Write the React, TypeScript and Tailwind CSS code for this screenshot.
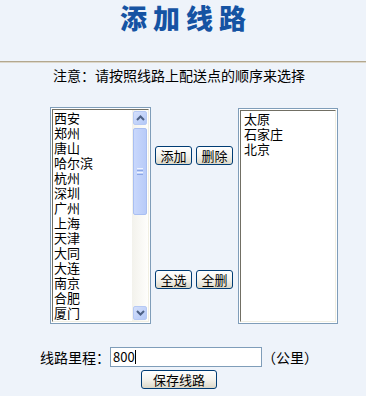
import React from 'react';

const font = { fontFamily: '"Noto Sans CJK SC", "Noto Sans", sans-serif' };

const leftItems = ['西安', '郑州', '唐山', '哈尔滨', '杭州', '深圳', '广州', '上海', '天津', '大同', '大连', '南京', '合肥', '厦门'];
const rightItems = ['太原', '石家庄', '北京'];

const Chevron: React.FC<{ down?: boolean }> = ({ down }) => (
  <svg width="9" height="6" viewBox="0 0 9 6">
    <polyline
      points={down ? '1,1 4.5,4.5 8,1' : '1,5 4.5,1.5 8,5'}
      fill="none"
      stroke="#4d6185"
      strokeWidth="2"
    />
  </svg>
);

const ScrollButton: React.FC<{ down?: boolean }> = ({ down }) => (
  <div className="h-[16px] p-px">
    <div className="h-full rounded-[2px] border border-[#b6c9f4] bg-gradient-to-br from-[#d5e0fb] to-[#b3c8f7] flex items-center justify-center">
      <Chevron down={down} />
    </div>
  </div>
);

const Scrollbar: React.FC = () => (
  <div className="w-[16px] h-full flex flex-col bg-gradient-to-r from-[#f3f2ec] to-[#fefefc]">
    <ScrollButton />
    <div className="mx-px mt-[2px] h-[87px] rounded-[2px] border border-[#a9bff2] bg-gradient-to-r from-[#c9d8fc] to-[#b8cbf8] flex flex-col items-center justify-center gap-[1px]">
      <div className="w-[6px] h-px bg-[#eef3fe]" />
      <div className="w-[6px] h-px bg-[#8ca7e6]" />
      <div className="w-[6px] h-px bg-[#eef3fe]" />
      <div className="w-[6px] h-px bg-[#8ca7e6]" />
    </div>
    <div className="flex-1" />
    <ScrollButton down />
  </div>
);

const XpButton: React.FC<{ label: string; className?: string }> = ({ label, className }) => (
  <div
    className={`h-[19px] rounded-[3px] border border-[#003c74] bg-gradient-to-b from-white via-[#f4f3ee] to-[#dcd8c8] flex items-center justify-center text-[13px] leading-none text-black ${className ?? ''}`}
  >
    {label}
  </div>
);

export default function App() {
  return (
    <div className="w-[366px] h-[396px] bg-[#eef3fa] overflow-hidden" style={font}>
      <div className="h-[61px] flex justify-center">
        <h1 className="pl-[6px] text-[27px] leading-[36px] font-black tracking-[6px] text-[#1553a3]">添加线路</h1>
      </div>
      <div className="h-px bg-[#b3a78e]" />
      <div className="h-px bg-[#dcd7cb]" />

      <p className="mt-[5px] pl-[53px] text-[14px] leading-[15px] text-black">注意：请按照线路上配送点的顺序来选择</p>

      <div className="mt-[24px] flex pl-[50px]">
        <div className="w-[101px] h-[217px] border border-[#7f9db9] bg-white p-px">
          <div className="h-full flex border-t border-l border-[#716f64] border-r border-b border-r-[#f1efe2] border-b-[#f1efe2]">
            <ul className="flex-1 pl-[1px] text-[13px] leading-[15px] text-black overflow-hidden">
              {leftItems.map((c) => (
                <li key={c}>{c}</li>
              ))}
            </ul>
            <Scrollbar />
          </div>
        </div>

        <div className="w-[87px] pl-[4px]">
          <div className="mt-[39px] flex gap-[4px]">
            <XpButton label="添加" className="w-[37px]" />
            <XpButton label="删除" className="w-[37px]" />
          </div>
          <div className="mt-[105px] flex gap-[4px]">
            <XpButton label="全选" className="w-[37px]" />
            <XpButton label="全删" className="w-[37px]" />
          </div>
        </div>

        <div className="mt-[1px] w-[100px] h-[216px] border border-[#7f9db9] bg-white p-px">
          <div className="h-full border-t border-l border-[#716f64] border-r border-b border-r-[#f1efe2] border-b-[#f1efe2]">
            <ul className="pl-[3px] text-[13px] leading-[15px] text-black">
              {rightItems.map((c) => (
                <li key={c}>{c}</li>
              ))}
            </ul>
          </div>
        </div>
      </div>

      <div className="mt-[23px] pl-[40px] flex items-center h-[20px] text-[14px] text-black">
        <span className="w-[70px]">线路里程：</span>
        <div className="w-[152px] h-[20px] border border-[#7f9db9] bg-white flex items-center pl-[2px] text-[13px]">
          <span>800</span>
          <span className="w-px h-[14px] bg-black" />
        </div>
        <span className="ml-0">（公里）</span>
      </div>

      <div className="mt-[3px] pl-[141px]">
        <XpButton label="保存线路" className="w-[76px]" />
      </div>
    </div>
  );
}
